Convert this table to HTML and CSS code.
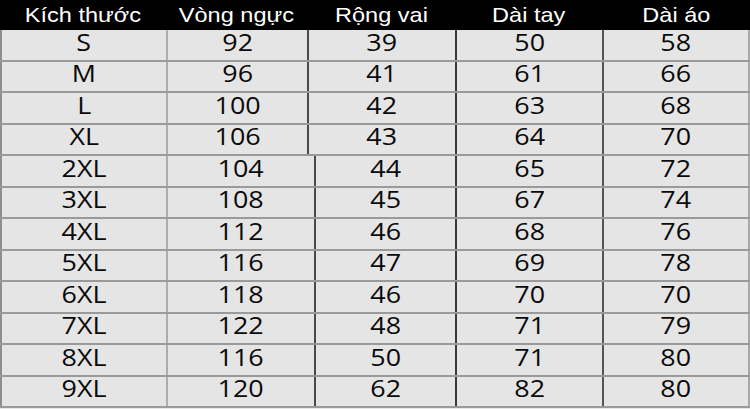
FILE: index.html
```html
<!DOCTYPE html>
<html lang="vi">
<head>
<meta charset="utf-8">
<title>Bảng kích thước</title>
<link rel="stylesheet" href="styles.css">
</head>
<body>
<div class="table">
  <div class="head">
    <div class="hc"><span>Kích thước</span></div>
    <div class="hc"><span>Vòng ngực</span></div>
    <div class="hc"><span>Rộng vai</span></div>
    <div class="hc"><span>Dài tay</span></div>
    <div class="hc"><span>Dài áo</span></div>
  </div>
  <div class="row a"><div class="c c1"><span>S</span></div><div class="c c2"><span>92</span></div><div class="c c3"><span>39</span></div><div class="c c4"><span>50</span></div><div class="c c5"><span>58</span></div></div>
  <div class="row a"><div class="c c1"><span>M</span></div><div class="c c2"><span>96</span></div><div class="c c3"><span>41</span></div><div class="c c4"><span>61</span></div><div class="c c5"><span>66</span></div></div>
  <div class="row a"><div class="c c1"><span>L</span></div><div class="c c2"><span>100</span></div><div class="c c3"><span>42</span></div><div class="c c4"><span>63</span></div><div class="c c5"><span>68</span></div></div>
  <div class="row a"><div class="c c1"><span>XL</span></div><div class="c c2"><span>106</span></div><div class="c c3"><span>43</span></div><div class="c c4"><span>64</span></div><div class="c c5"><span>70</span></div></div>
  <div class="row b"><div class="c c1"><span>2XL</span></div><div class="c c2"><span>104</span></div><div class="c c3"><span>44</span></div><div class="c c4"><span>65</span></div><div class="c c5"><span>72</span></div></div>
  <div class="row b"><div class="c c1"><span>3XL</span></div><div class="c c2"><span>108</span></div><div class="c c3"><span>45</span></div><div class="c c4"><span>67</span></div><div class="c c5"><span>74</span></div></div>
  <div class="row b"><div class="c c1"><span>4XL</span></div><div class="c c2"><span>112</span></div><div class="c c3"><span>46</span></div><div class="c c4"><span>68</span></div><div class="c c5"><span>76</span></div></div>
  <div class="row b"><div class="c c1"><span>5XL</span></div><div class="c c2"><span>116</span></div><div class="c c3"><span>47</span></div><div class="c c4"><span>69</span></div><div class="c c5"><span>78</span></div></div>
  <div class="row b"><div class="c c1"><span>6XL</span></div><div class="c c2"><span>118</span></div><div class="c c3"><span>46</span></div><div class="c c4"><span>70</span></div><div class="c c5"><span>70</span></div></div>
  <div class="row b"><div class="c c1"><span>7XL</span></div><div class="c c2"><span>122</span></div><div class="c c3"><span>48</span></div><div class="c c4"><span>71</span></div><div class="c c5"><span>79</span></div></div>
  <div class="row b"><div class="c c1"><span>8XL</span></div><div class="c c2"><span>116</span></div><div class="c c3"><span>50</span></div><div class="c c4"><span>71</span></div><div class="c c5"><span>80</span></div></div>
  <div class="row b"><div class="c c1"><span>9XL</span></div><div class="c c2"><span>120</span></div><div class="c c3"><span>62</span></div><div class="c c4"><span>82</span></div><div class="c c5"><span>80</span></div></div>
</div>
</body>
</html>
```
FILE: styles.css
```css
* { box-sizing: border-box; }
html, body { margin: 0; padding: 0; background: #e8e8e8; }
.table {
  width: 750px;
  height: 408px;
  display: grid;
  grid-template-rows: 30px repeat(12, 1fr);
}
.head {
  display: grid;
  grid-template-columns: 166px 141px 148px 147px 148px;
  background: #000;
  color: #fff;
  font-family: "Liberation Sans", Arial, sans-serif;
  font-size: 21px;
  line-height: 30px;
}
.hc { display: flex; justify-content: center; white-space: nowrap; }
.hc span { display: inline-block; transform: scaleX(1.12); }
.row {
  display: grid;
  background: #e5e5e5;
  border-bottom: 2px solid #9a9a9a;
  font-family: "Open Sans", "Liberation Sans", sans-serif;
  font-size: 24px;
  line-height: 22px;
  color: #0a0a0a;
}
.row.a { grid-template-columns: 166px 141px 148px 147px 148px; }
.row.b { grid-template-columns: 166px 148px 141px 147px 148px; }
.c {
  display: flex;
  justify-content: center;
  align-items: flex-start;
  padding-top: 0.5px;
  white-space: nowrap;
}
.c span { display: inline-block; transform: scaleX(1.12); }
.c1 { border-left: 2px solid #8e8e8e; }
.c2 { border-left: 2px solid #adadad; }
.c3 { border-left: 2px solid #4a4a4a; }
.c4 { border-left: 2px solid #3a3a3a; }
.c5 { border-left: 2px solid #555; border-right: 2px solid #a8a8a8; }
```
